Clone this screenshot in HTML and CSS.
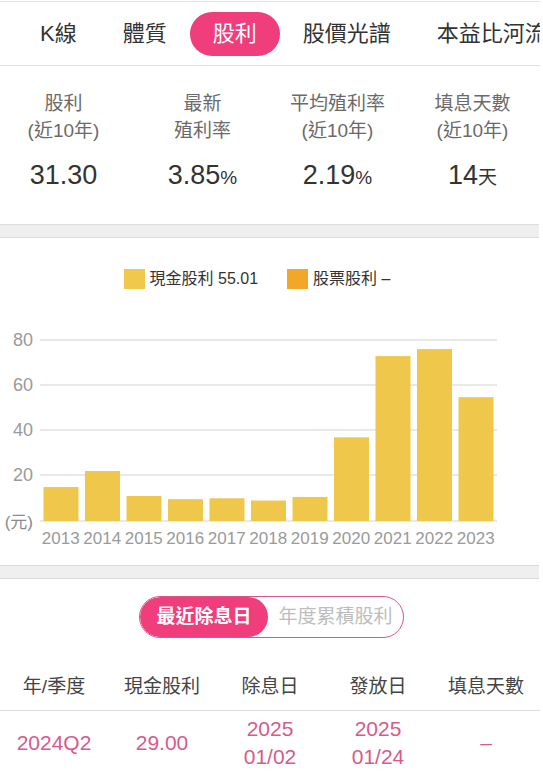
FILE: index.html
```html
<!DOCTYPE html>
<html lang="zh-Hant">
<head>
  <meta charset="UTF-8">
  <meta name="viewport" content="width=device-width, initial-scale=1.0">
  <title>股利</title>
  <link rel="stylesheet" href="styles.css">
</head>
<body>
  <div class="page">
    <nav class="tabs">
      <span class="tab">K線</span>
      <span class="tab">體質</span>
      <span class="tab active">股利</span>
      <span class="tab">股價光譜</span>
      <span class="tab">本益比河流圖</span>
    </nav>

    <section class="stats">
      <div class="stat">
        <div class="stat-label">股利<br>(近10年)</div>
        <div class="stat-value">31.30</div>
      </div>
      <div class="stat">
        <div class="stat-label">最新<br>殖利率</div>
        <div class="stat-value">3.85<small>%</small></div>
      </div>
      <div class="stat">
        <div class="stat-label">平均殖利率<br>(近10年)</div>
        <div class="stat-value">2.19<small>%</small></div>
      </div>
      <div class="stat">
        <div class="stat-label">填息天數<br>(近10年)</div>
        <div class="stat-value">14<small>天</small></div>
      </div>
    </section>

    <div class="divider"></div>

    <section class="chart-card">
      <div class="legend">
        <span class="legend-item"><i class="swatch cash"></i>現金股利 55.01</span>
        <span class="legend-item"><i class="swatch stock"></i>股票股利 –</span>
      </div>
      <svg class="chart" width="540" height="265" viewBox="0 0 540 265">
        <g class="grid">
          <line x1="40" y1="40" x2="497" y2="40"/>
          <line x1="40" y1="85" x2="497" y2="85"/>
          <line x1="40" y1="130" x2="497" y2="130"/>
          <line x1="40" y1="175" x2="497" y2="175"/>
          <line x1="40" y1="221" x2="497" y2="221"/>
        </g>
        <g class="axis-y">
          <text x="33" y="46">80</text>
          <text x="33" y="91">60</text>
          <text x="33" y="136">40</text>
          <text x="33" y="181">20</text>
          <text x="33" y="228" class="unit">(元)</text>
        </g>
        <g class="bars" id="bars"></g>
        <g class="axis-x" id="years"></g>
      </svg>
    </section>

    <div class="divider"></div>

    <section class="dividend">
      <div class="toggle">
        <span class="toggle-btn on">最近除息日</span>
        <span class="toggle-btn">年度累積股利</span>
      </div>
      <table class="div-table">
        <thead>
          <tr>
            <th>年/季度</th>
            <th>現金股利</th>
            <th>除息日</th>
            <th>發放日</th>
            <th>填息天數</th>
          </tr>
        </thead>
        <tbody>
          <tr>
            <td>2024Q2</td>
            <td>29.00</td>
            <td>2025<br>01/02</td>
            <td>2025<br>01/24</td>
            <td>–</td>
          </tr>
        </tbody>
      </table>
    </section>
  </div>
  <script>
    // Yearly cash dividend, drawn as bars (2.25px per unit, baseline at y=221)
    const data = [
      [2013, 15.1], [2014, 22.2], [2015, 11.1], [2016, 9.7], [2017, 10.1],
      [2018, 9.1], [2019, 10.7], [2020, 37.2], [2021, 73.3], [2022, 76.4], [2023, 55.01]
    ];
    const ns = "http://www.w3.org/2000/svg";
    const bars = document.getElementById("bars");
    const years = document.getElementById("years");
    const band = 41.5;

    data.forEach(([year, value], i) => {
      const h = value * 2.25;
      const rect = document.createElementNS(ns, "rect");
      rect.setAttribute("x", 40 + band * i + 3.5);
      rect.setAttribute("y", 221 - h);
      rect.setAttribute("width", 35);
      rect.setAttribute("height", h);
      bars.appendChild(rect);

      const label = document.createElementNS(ns, "text");
      label.setAttribute("x", 40 + band * i + band / 2);
      label.setAttribute("y", 244);
      label.textContent = year;
      years.appendChild(label);
    });
  </script>
</body>
</html>
```

FILE: styles.css
```css
body {
  margin: 0;
  padding: 0;
  background-color: #fff;
  font-family: "Liberation Sans", "Noto Sans CJK TC", sans-serif;
  color: #333;
}

.page {
  width: 540px;
  overflow: hidden;
}

/* top tab strip */
.tabs {
  display: flex;
  align-items: center;
  height: 63px;
  padding-left: 17px;
  border-top: 1px solid #e4e4e4;
  border-bottom: 1px solid #e0e0e0;
  margin-top: 1px;
  white-space: nowrap;
  overflow: hidden;
}

.tab {
  flex: none;
  padding: 0 23px;
  height: 44px;
  line-height: 44px;
  font-size: 22px;
  color: #333;
  border-radius: 22px;
}

.tab.active {
  background-color: #f03d7b;
  color: #fff;
}

/* summary numbers */
.stats {
  display: grid;
  grid-template-columns: repeat(4, 1fr);
  padding: 24px 0 0 0;
  height: 134px;
}

.stat {
  text-align: center;
}

.stat:first-child {
  padding-right: 8px;
}

.stat-label {
  font-size: 19px;
  line-height: 27px;
  color: #6a6a6a;
}

.stat-value {
  margin-top: 14px;
  font-size: 27px;
  line-height: 34px;
  color: #333;
}

.stat-value small {
  font-size: 19px;
}

.divider {
  height: 12px;
  background-color: #efefef;
  border-top: 1px solid #dcdcdc;
  border-bottom: 1px solid #dcdcdc;
  margin-right: 1px;
}

/* chart */
.chart-card {
  padding-top: 31px;
}

.legend {
  display: flex;
  justify-content: center;
  gap: 29px;
  font-size: 16px;
  line-height: 20px;
  color: #333;
  padding-right: 26px;
}

.legend-item {
  display: flex;
  align-items: center;
  gap: 5px;
}

.swatch {
  display: inline-block;
  width: 21px;
  height: 20px;
}

.swatch.cash {
  background-color: #f0c84b;
}

.swatch.stock {
  background-color: #f2a729;
}

.chart {
  display: block;
  margin-top: 11px;
}

.grid line {
  stroke: #e2e2e2;
  stroke-width: 1.5;
}

.bars rect {
  fill: #efc74b;
}

.axis-y text {
  font-size: 18px;
  fill: #9a9a9a;
  text-anchor: end;
}

.axis-y .unit {
  font-size: 17px;
  fill: #8a8a8a;
}

.axis-x text {
  font-size: 17px;
  fill: #9a9a9a;
  text-anchor: middle;
}

/* recent dividend table */
.dividend {
  padding-top: 17px;
}

.toggle {
  display: flex;
  width: 263px;
  height: 40px;
  margin-left: 139px;
  border: 1.5px solid #d9578a;
  border-radius: 22px;
  overflow: hidden;
}

.toggle-btn {
  flex: 1;
  text-align: center;
  line-height: 40px;
  font-size: 19px;
  color: #bdbdbd;
}

.toggle-btn.on {
  flex: none;
  width: 128px;
  background-color: #f03d7b;
  color: #fff;
  font-weight: bold;
  border-radius: 22px;
}

.div-table {
  width: 540px;
  margin-top: 20px;
  border-collapse: collapse;
  table-layout: fixed;
}

.div-table th {
  height: 52px;
  padding: 0;
  font-size: 19px;
  font-weight: normal;
  color: #444;
  border-bottom: 1px solid #dedede;
}

.div-table td {
  padding: 4px 0;
  text-align: center;
  font-size: 21px;
  line-height: 28px;
  color: #d95a8a;
}
```
